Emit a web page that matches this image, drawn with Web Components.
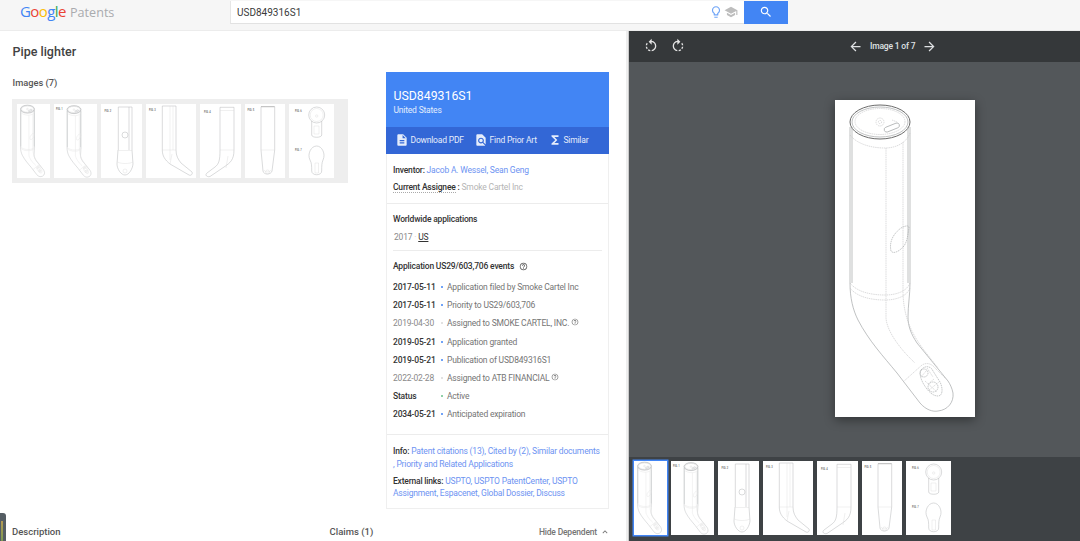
<!DOCTYPE html>
<html lang="en">
<head>
<meta charset="utf-8">
<title>Pipe lighter - Google Patents</title>
<style>
    html, body { margin: 0; height: 541px; overflow: hidden; background: #fff; }
    body { font-family: Roboto, "Liberation Sans", sans-serif; }
</style>
</head>
<body>
<patent-app></patent-app>
<script>
const ICONS = {
    bulb: 'M9 21c0 .55.45 1 1 1h4c.55 0 1-.45 1-1v-1H9v1zm3-19C8.14 2 5 5.14 5 9c0 2.38 1.19 4.47 3 5.74V17c0 .55.45 1 1 1h6c.55 0 1-.45 1-1v-2.26c1.81-1.27 3-3.36 3-5.74 0-3.86-3.14-7-7-7zm2.85 11.1l-.85.6V16h-4v-2.3l-.85-.6C7.8 12.16 7 10.63 7 9c0-2.76 2.24-5 5-5s5 2.24 5 5c0 1.63-.8 3.16-2.15 4.1z',
    school: 'M5 13.18v4L12 21l7-3.82v-4L12 17l-7-3.82zM12 3L1 9l11 6 9-4.91V17h2V9L12 3z',
    search: 'M15.5 14h-.79l-.28-.27C15.41 12.59 16 11.11 16 9.5 16 5.91 13.09 3 9.5 3S3 5.91 3 9.5 5.91 16 9.5 16c1.61 0 3.09-.59 4.23-1.57l.27.28v.79l5 4.99L20.49 19l-4.99-5zm-6 0C7.01 14 5 11.99 5 9.5S7.01 5 9.5 5 14 7.01 14 9.5 11.99 14 9.5 14z',
    doc: 'M14 2H6c-1.1 0-1.99.9-1.99 2L4 20c0 1.1.89 2 1.99 2H18c1.1 0 2-.9 2-2V8l-6-6zm2 16H8v-2h8v2zm0-4H8v-2h8v2zm-3-5V3.5L18.5 9H13z',
    find: 'M20 19.59V8l-6-6H6c-1.1 0-1.99.9-1.99 2L4 20c0 1.1.89 2 1.99 2H18c.45 0 .85-.15 1.19-.4l-4.43-4.43c-.8.52-1.74.83-2.76.83-2.76 0-5-2.24-5-5s2.24-5 5-5 5 2.24 5 5c0 1.02-.31 1.96-.83 2.75L20 19.59zM9 13c0 1.66 1.34 3 3 3s3-1.34 3-3-1.34-3-3-3-3 1.34-3 3z',
    sigma: 'M18 4H6v2l6.5 6L6 18v2h12v-3h-7l5-5-5-5h7z',
    help: 'M11 18h2v-2h-2v2zm1-16C6.48 2 2 6.48 2 12s4.48 10 10 10 10-4.48 10-10S17.52 2 12 2zm0 18c-4.41 0-8-3.59-8-8s3.59-8 8-8 8 3.59 8 8-3.59 8-8 8zm0-14c-2.21 0-4 1.79-4 4h2c0-1.1.9-2 2-2s2 .9 2 2c0 2-3 1.75-3 5h2c0-2.25 3-2.5 3-5 0-2.21-1.79-4-4-4z',
    chevron: 'M7.41 15.41L12 10.83l4.59 4.58L18 14l-6-6-6 6z',
    back: 'M20 11H7.83l5.59-5.59L12 4l-8 8 8 8 1.41-1.41L7.83 13H20v-2z',
    forward: 'M12 4l-1.41 1.41L16.17 11H4v2h12.17l-5.58 5.59L12 20l8-8z',
    rotl: 'M7.11 8.53L5.7 7.11C4.8 8.27 4.24 9.61 4.07 11h2.02c.14-.87.49-1.72 1.02-2.47zM6.09 13H4.07c.17 1.39.72 2.73 1.62 3.89l1.41-1.42c-.52-.75-.87-1.59-1.01-2.47zm1.01 5.32c1.16.9 2.51 1.44 3.9 1.61V17.9c-.87-.15-1.71-.49-2.46-1.03L7.1 18.32zM13 4.07V1L8.45 5.55 13 10V6.09c2.84.48 5 2.94 5 5.91s-2.16 5.43-5 5.91v2.02c3.95-.49 7-3.85 7-7.93s-3.05-7.44-7-7.93z',
    rotr: 'M15.55 5.55L11 1v3.07C7.06 4.56 4 7.92 4 12s3.05 7.44 7 7.93v-2.02c-2.84-.48-5-2.94-5-5.91s2.16-5.43 5-5.91V10l4.55-4.45zM19.93 11c-.17-1.39-.72-2.73-1.62-3.89l-1.42 1.42c.54.75.88 1.6 1.02 2.47h2.02zM13 17.9v2.02c1.39-.17 2.74-.71 3.9-1.61l-1.44-1.44c-.75.54-1.59.89-2.46 1.03zm3.89-2.42l1.42 1.41c.9-1.16 1.45-2.5 1.62-3.89h-2.02c-.14.87-.48 1.72-1.02 2.48z'
};

class PatentIcon extends HTMLElement {
    constructor() {
        super();
        this.attachShadow({mode: 'open'});
    }

    connectedCallback() {
        const size = this.getAttribute('size') || 16;
        this.shadowRoot.innerHTML = `
            <style>
                :host { display: inline-flex; flex: none; width: ${size}px; height: ${size}px; fill: currentColor; }
                svg { width: 100%; height: 100%; display: block; }
            </style>
            <svg viewBox="0 0 24 24"><path d="${ICONS[this.getAttribute('name')]}"/></svg>
        `;
    }
}
customElements.define('patent-icon', PatentIcon);

// the whole pipe at its big size, 140x317 sheet
const PIPE = `
    <path class="o" d="M15 27V183C15 198 18 210 23 220C34 241 48 256 62 273L85 303C91 310 98 312 103 311C113 310 119 302 118 293C117 288 115 284 113 281L82 243C76 234 73 226 73 217C73 205 75 195 75 183V27"/>
    <ellipse class="d" cx="45" cy="22" rx="30" ry="17"/>
    <ellipse class="o" cx="45" cy="22" rx="28" ry="15"/>
    <ellipse class="l" cx="45" cy="21.500" rx="25" ry="13"/>
    <circle class="l" cx="45" cy="22" r="4"/><circle class="l" cx="45" cy="22" r="1.600"/>
    <rect class="o" x="49" y="25" width="16" height="5" rx="2.500" transform="rotate(-22 57 28)"/>
    <path class="l" d="M57 20L62 22"/>
    <path class="o" d="M17 27V183M73 27V183"/>
    <path class="l" d="M15 35C22 44 36 48 50 48C62 48 72 42 75 33"/>
    <path class="l" d="M51 48V218C52 232 66 250 80 263M68 42V190C68 216 76 234 92 254L103 268"/>
    <path class="l k2" d="M56 151C54 142 58 134 66 128C70 126 73 125 74 127C73 135 72 144 67 148C63 152 58 154 56 151Z"/>
    <path class="l" d="M15 183C22 192 36 195 50 195C62 195 72 191 75 183M15 188C22 197 36 200 50 200C62 200 72 196 75 188"/>
    <path class="l" d="M68 282L87 265C92 262 97 264 100 268L113 281"/>
    <path class="l k2" d="M86 270C90 265 96 266 98 271L105 282C108 288 108 296 103 296C97 296 92 290 88 283C86 279 84 274 86 270Z"/>
    <circle class="l k2" cx="89" cy="273" r="4"/><circle class="l k2" cx="98" cy="287" r="5"/>
    <path class="l" d="M92 268L98 277M90 281L102 292M94 290L104 282M86 277L92 270M93 284L99 279"/>
`;

// thumbnails are drawn in their own pixels, as in the gallery
const FIGURES = [
    {w: 33, h: 74, body: `<g class="t" transform="scale(.2334)">${PIPE}</g>`},
    {w: 43, h: 74, body: `<text x="2" y="6">FIG. 1</text><g class="t" transform="translate(9.500 .5) scale(.2334)">${PIPE}</g>`},
    {w: 41, h: 74, body: `<text x="3.500" y="8">FIG. 2</text>
        <path d="M17.300 3H31V46M17.300 3V46M28 3V46M17 46L16 60C16 65 20 71 24 71C28 71 31.500 65 32 60L31 46"/>
        <circle cx="24" cy="31" r="3"/><path class="f" d="M17 46.500H31M16.500 58C20 60 28 60 32 58"/><circle class="f" cx="24" cy="67" r="2"/>`},
    {w: 50, h: 74, body: `<text x="3" y="7">FIG. 3</text>
        <path d="M16.300 2H30V46C30 52 32 55 35 59L46 68C47 70 45 72 43 71L24 60C19 56 16.300 52 16.300 46V2"/>
        <path class="f" d="M24 2V56M27 2V46"/><path class="f" d="M16 46H30M26 50L24 60"/>`},
    {w: 41, h: 74, body: `<text x="4" y="8.500">FIG. 4</text>
        <path d="M20 3.300H34V46C34 56 30 59 24 63L10 72.500C7 73.500 4.500 71 7 69L15 63C19 60 20 56 20 46Z"/>
        <path class="f" d="M20 6.500H34M20 46H34M28 52L26 64"/>`},
    {w: 40, h: 74, body: `<text x="2.500" y="7">FIG. 5</text>
        <path class="k" d="M16 2.700H29.700"/>
        <path d="M16 2.700V46L18 67C18.500 71 26 71 27 67L29.700 46V2.700"/>
        <path class="f" d="M16 46H29.700M19 66C20 68.500 25 68.500 26 66"/><circle class="f" cx="22.500" cy="68" r="2"/>`},
    {w: 45, h: 74, body: `<text x="6" y="7.500">FIG. 6</text><text x="6" y="47">FIG. 7</text>
        <circle cx="27.700" cy="11" r="8"/><circle class="f" cx="27.700" cy="11" r="6.500"/><circle class="f" cx="27.700" cy="12" r="1.200"/>
        <path d="M22.700 17V31C22.700 34 32.700 34 32.700 31V17"/><path class="f" d="M25 22H30V30H25Z"/>
        <path d="M21 56C18 50 22 42 27.700 42C33 42 37 50 34 56C32.700 59 32.700 62 32.700 67C32.700 72 22.700 72 22.700 67C22.700 62 22.700 59 21 56Z"/>
        <path class="f" d="M26 59H29.500V69H26Z"/>`}
];

class PatentFigure extends HTMLElement {
    constructor() {
        super();
        this.attachShadow({mode: 'open'});
    }

    connectedCallback() {
        const big = this.hasAttribute('big');
        const fig = FIGURES[+this.getAttribute('index') || 0];
        const vw = big ? 140 : fig.w;
        const vh = big ? 317 : fig.h;
        this.shadowRoot.innerHTML = `
            <style>
                :host { display: block; flex: none; width: ${vw}px; height: ${vh}px; background: #fff; }
                svg { display: block; width: 100%; height: 100%; fill: none; stroke: #b4b6b8; stroke-width: .5; }
                text { fill: #666; stroke: none; font: 500 2.600px Roboto, sans-serif; }
                .f { stroke: #d8d9da; stroke-width: .4; }
                .k { stroke: #888; stroke-width: .6; }
                .o { stroke: #a4a6a8; stroke-width: .7; }
                .d { stroke: #6a6a6a; stroke-width: 1; }
                .l { stroke: #c4c5c6; stroke-width: .6; stroke-dasharray: 1.500 .7; }
                .k2 { stroke: #a0a2a4; }
                .t path, .t ellipse, .t rect, .t circle { stroke-width: 2; stroke: #bcbec0; }
                .t .l { stroke: #e4e4e4; stroke-dasharray: none; }
                .t .d { stroke: #9c9ea0; }
            </style>
            <svg viewBox="0 0 ${vw} ${vh}">${big ? PIPE : fig.body}</svg>
        `;
    }
}
customElements.define('patent-figure', PatentFigure);

const headerTemplate = document.createElement('template');
headerTemplate.innerHTML = `
    <style>
        :host {
            display: flex;
            height: 31px;
            flex: none;
            box-sizing: border-box;
            background: #f6f6f6;
            border-bottom: 1px solid #ececec;
            align-items: flex-start;
        }
        #logo {
            width: 210px;
            padding: 0 0 0 20px;
            font: 400 12.600px/22px "Open Sans", "Liberation Sans", sans-serif;
            color: #a9abae;
            white-space: nowrap;
        }
        #logo b { font-weight: 400; letter-spacing: -.6px; font-size: 15px; margin-right: 1px; }
        #box {
            display: flex;
            width: 558px;
            height: 23px;
            margin-top: 1px;
            box-sizing: border-box;
            align-items: center;
            background: #fff;
            border-bottom: 1px solid #e2e2e2;
            border-left: 1px solid #e6e6e6;
            padding-left: 6px;
            font: 400 10px Roboto, sans-serif;
            color: #3a3a3a;
        }
        #term { flex: 1; }
        patent-icon { margin-right: 1px; }
        #go {
            display: flex;
            width: 44px;
            height: 23px;
            margin-left: 5px;
            align-items: center;
            justify-content: center;
            background: #4285f4;
            color: #fff;
        }
    </style>
    <div id="logo"><b><span style="color:#4285f4">G</span><span style="color:#ea4335">o</span><span style="color:#fbbc05">o</span><span style="color:#4285f4">g</span><span style="color:#34a853">l</span><span style="color:#ea4335">e</span></b> Patents</div>
    <div id="box">
        <span id="term">USD849316S1</span>
        <patent-icon name="bulb" size="14" style="color:#6ea4f7"></patent-icon>
        <patent-icon name="school" size="14" style="color:#bdbdbd"></patent-icon>
        <div id="go"><patent-icon name="search" size="14"></patent-icon></div>
    </div>
`;

class PatentHeader extends HTMLElement {
    constructor() {
        super();
        const shadowRoot = this.attachShadow({mode: 'open'});
        shadowRoot.appendChild(headerTemplate.content.cloneNode(true));
    }
}
customElements.define('patent-header', PatentHeader);

const eventTemplate = document.createElement('template');
eventTemplate.innerHTML = `
    <style>
        :host {
            display: flex;
            height: 18.200px;
            align-items: center;
            font-size: 8.500px;
            letter-spacing: -.19px;
            color: #757575;
        }
        #date { width: 47.500px; font-weight: 500; color: #333; white-space: nowrap; }
        :host([faint]) #date { font-weight: 400; color: #8a8a8a; }
        #dot { width: 2px; height: 2px; margin-right: 4.500px; background: var(--dot, #4285f4); border-radius: 50%; }
        :host([faint]) #dot { background: #d8d8d8; }
        #what { white-space: nowrap; display: flex; align-items: flex-start; gap: 2px; }
    </style>
    <span id="date"><slot name="date"></slot></span>
    <span id="dot"></span>
    <span id="what"><slot></slot></span>
`;

class PatentEvent extends HTMLElement {
    constructor() {
        super();
        const shadowRoot = this.attachShadow({mode: 'open'});
        shadowRoot.appendChild(eventTemplate.content.cloneNode(true));
    }
}
customElements.define('patent-event', PatentEvent);

const cardTemplate = document.createElement('template');
cardTemplate.innerHTML = `
    <style>
        :host {
            display: block;
            width: 223px;
            height: 437px;
            box-sizing: border-box;
            border: 1px solid #efefef;
            border-top: 0;
            font-size: 8.500px;
            letter-spacing: -.19px;
            color: #757575;
            flex: none;
        }
        a { color: #6d93f2; text-decoration: none; }
        b { font-weight: 500; color: #333; }
        #top { height: 55px; box-sizing: border-box; margin: 0 -1px; padding: 16px 7.500px 0; background: #4285f4; color: #fff; }
        #num { font-size: 12.300px; line-height: 16px; letter-spacing: 0; }
        #country { line-height: 12px; color: #e3edfd; }
        #actions { display: flex; height: 27px; box-sizing: border-box; margin: 0 -1px; padding: 0 0 1px 8.500px; align-items: center; background: #3367d6; color: #e6edfb; }
        #actions span { display: inline-flex; align-items: center; gap: 2px; }
        #people { height: 50px; box-sizing: border-box; padding: 8px 6px 0; border-bottom: 1px solid #ececec; line-height: 17px; }
        #people u { text-decoration: none; border-bottom: 1px dotted #aaa; }
        #people .grey { color: #b5b5b5; }
        #apps { height: 231px; box-sizing: border-box; padding: 9px 6px 0; border-bottom: 1px solid #ececec; }
        #ww { line-height: 12px; }
        #year { line-height: 12px; margin-top: 6px; padding: 0 1px 7px; border-bottom: 1px solid #ececec; color: #8a8a8a; }
        #year u { color: #333; }
        #year i { font-style: normal; color: #ccc; }
        #ev { display: flex; align-items: center; gap: 5px; line-height: 12px; margin-top: 9px; margin-bottom: 6px; }
        #links { padding: 10px 6px 0; line-height: 12.500px; }
        #links p { margin: 0 0 4.500px; white-space: nowrap; }
    </style>
    <div id="top">
        <div id="num">USD849316S1</div>
        <div id="country">United States</div>
    </div>
    <div id="actions">
        <span style="width:79px"><patent-icon name="doc" size="14"></patent-icon>Download PDF</span>
        <span style="width:74px"><patent-icon name="find" size="14"></patent-icon>Find Prior Art</span>
        <span><patent-icon name="sigma" size="14"></patent-icon>Similar</span>
    </div>
    <div id="people">
        <div><b>Inventor:</b> <a>Jacob A. Wessel, Sean Geng</a></div>
        <div><b><u>Current Assignee</u> :</b> <span class="grey">Smoke Cartel Inc</span></div>
    </div>
    <div id="apps">
        <div id="ww"><b>Worldwide applications</b></div>
        <div id="year">2017 <i>·</i> <u>US</u></div>
        <div id="ev"><b>Application US29/603,706 events</b><patent-icon name="help" size="9" style="color:#555"></patent-icon></div>
        <slot></slot>
    </div>
    <div id="links">
        <p><b>Info:</b> <a>Patent citations (13), Cited by (2), Similar documents<br>, Priority and Related Applications</a></p>
        <p><b>External links:</b> <a>USPTO, USPTO PatentCenter, USPTO<br>Assignment, Espacenet, Global Dossier, Discuss</a></p>
    </div>
`;

class PatentCard extends HTMLElement {
    constructor() {
        super();
        const shadowRoot = this.attachShadow({mode: 'open'});
        shadowRoot.appendChild(cardTemplate.content.cloneNode(true));
    }
}
customElements.define('patent-card', PatentCard);

const viewerTemplate = document.createElement('template');
viewerTemplate.innerHTML = `
    <style>
        :host {
            display: flex;
            flex-direction: column;
            flex: 1;
            background: #53575a;
            color: #fff;
        }
        #bar {
            display: flex;
            height: 31px;
            flex: none;
            padding: 0 0 1px 14px;
            align-items: center;
            background: #35383a;
            box-sizing: border-box;
        }
        #rot { display: flex; gap: 11px; width: 205px; color: #e4e4e4; }
        #pager { display: flex; align-items: center; gap: 7px; font-size: 8.500px; letter-spacing: -.19px; font-weight: 500; color: #dfe1e3; }
        #stage { flex: 1; display: flex; padding: 38px 0 0 206px; box-sizing: border-box; }
        patent-figure[big] { box-shadow: 0 3px 10px rgba(0, 0, 0, .4); }
        #strip { display: flex; height: 84px; flex: none; gap: 4px; padding: 4px 0 0 4.500px; box-sizing: border-box; background: #3e4245; }
        #strip .sel { box-shadow: 0 0 0 1.500px #4285f4; margin-right: .5px; }
    </style>
    <div id="bar">
        <div id="rot"><patent-icon name="rotl" size="16"></patent-icon><patent-icon name="rotr" size="16"></patent-icon></div>
        <div id="pager"><patent-icon name="back" size="15"></patent-icon><span>Image 1 of 7</span><patent-icon name="forward" size="15"></patent-icon></div>
    </div>
    <div id="stage"><patent-figure big></patent-figure></div>
    <div id="strip"></div>
`;

class ImageViewer extends HTMLElement {
    constructor() {
        super();
        const shadowRoot = this.attachShadow({mode: 'open'});
        shadowRoot.appendChild(viewerTemplate.content.cloneNode(true));
        const strip = shadowRoot.querySelector('#strip');
        FIGURES.forEach((fig, i) => {
            const el = document.createElement('patent-figure');
            el.setAttribute('index', i);
            if (i === 0) {
                el.classList.add('sel');
            }
            strip.appendChild(el);
        });
    }
}
customElements.define('image-viewer', ImageViewer);

const galleryTemplate = document.createElement('template');
galleryTemplate.innerHTML = `
    <style>
        :host { display: block; width: 336px; padding-top: 5px; }
        h3 { margin: 0 0 10px; padding-left: .5px; font-size: 9.300px; line-height: 12px; font-weight: 500; color: #555; }
        #thumbs { display: flex; gap: 4px; height: 84px; padding: 5px; box-sizing: border-box; background: #eee; }
    </style>
    <h3>Images (7)</h3>
    <div id="thumbs"></div>
`;

class PatentGallery extends HTMLElement {
    constructor() {
        super();
        const shadowRoot = this.attachShadow({mode: 'open'});
        shadowRoot.appendChild(galleryTemplate.content.cloneNode(true));
        const thumbs = shadowRoot.querySelector('#thumbs');
        FIGURES.forEach((fig, i) => {
            const el = document.createElement('patent-figure');
            el.setAttribute('index', i);
            thumbs.appendChild(el);
        });
    }
}
customElements.define('patent-gallery', PatentGallery);

const appTemplate = document.createElement('template');
appTemplate.innerHTML = `
    <style>
        :host {
            display: flex;
            flex-direction: column;
            height: 541px;
            font-family: Roboto, "Liberation Sans", sans-serif;
            position: relative;
            overflow: hidden;
        }
        #main { display: flex; flex: 1; min-height: 0; }
        #left { display: flex; flex-direction: column; width: 626px; flex: none; box-sizing: border-box; padding-left: 12px; }
        #divider { width: 2px; flex: none; background: #eeeeee; border-right: 1px solid #c9c9c9; }
        h1 { margin: 0; padding: 12px 0 0 .5px; height: 29px; font-size: 12.500px; line-height: 17px; font-weight: 500; color: #424242; }
        #row { display: flex; gap: 38px; }
        #foot { display: flex; margin-top: 15px; height: 15px; align-items: center; font-size: 9.500px; font-weight: 500; color: #555; }
        #foot .claims { margin-left: 269px; }
        #foot .hide { margin-left: auto; margin-right: 16px; display: flex; align-items: center; gap: 3px; font-size: 8.500px; letter-spacing: -.19px; color: #757575; }
        #meter {
            position: absolute;
            left: 0;
            top: 513px;
            width: 6px;
            height: 28px;
            border-radius: 0 3px 0 0;
            background: #555d63;
        }
        #meter i { position: absolute; left: 1px; top: 8px; width: 2px; height: 20px; background: linear-gradient(#b59a52, #7c9a52); }
    </style>
    <patent-header></patent-header>
    <div id="main">
        <div id="left">
            <h1>Pipe lighter</h1>
            <div id="row">
                <patent-gallery></patent-gallery>
                <patent-card>
                    <patent-event><span slot="date">2017-05-11</span>Application filed by Smoke Cartel Inc</patent-event>
                    <patent-event><span slot="date">2017-05-11</span>Priority to US29/603,706</patent-event>
                    <patent-event faint><span slot="date">2019-04-30</span>Assigned to SMOKE CARTEL, INC.<patent-icon name="help" size="8"></patent-icon></patent-event>
                    <patent-event><span slot="date">2019-05-21</span>Application granted</patent-event>
                    <patent-event><span slot="date">2019-05-21</span>Publication of USD849316S1</patent-event>
                    <patent-event faint><span slot="date">2022-02-28</span>Assigned to ATB FINANCIAL<patent-icon name="help" size="8"></patent-icon></patent-event>
                    <patent-event style="--dot:#6cc08b"><span slot="date">Status</span>Active</patent-event>
                    <patent-event><span slot="date">2034-05-21</span>Anticipated expiration</patent-event>
                </patent-card>
            </div>
            <div id="foot">
                <span>Description</span>
                <span class="claims">Claims (1)</span>
                <span class="hide">Hide Dependent <patent-icon name="chevron" size="10"></patent-icon></span>
            </div>
        </div>
        <div id="divider"></div>
        <image-viewer></image-viewer>
    </div>
    <div id="meter"><i></i></div>
`;

class PatentApp extends HTMLElement {
    constructor() {
        super();
        const shadowRoot = this.attachShadow({mode: 'open'});
        shadowRoot.appendChild(appTemplate.content.cloneNode(true));
    }
}
customElements.define('patent-app', PatentApp);
</script>
</body>
</html>
